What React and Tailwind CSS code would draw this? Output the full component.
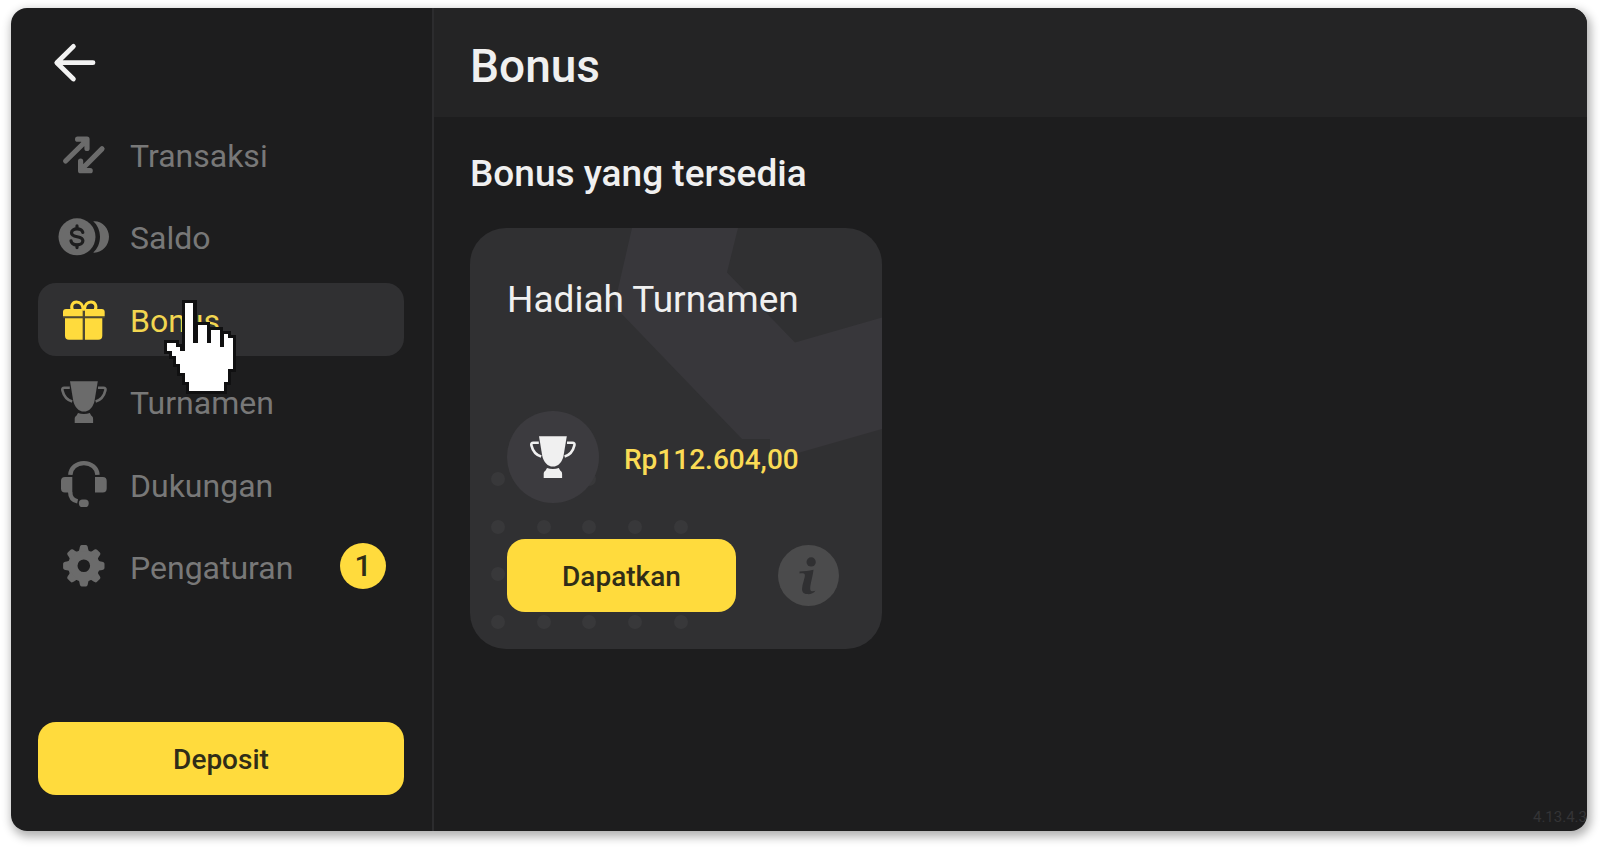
import React from "react";

function IconBox({ children }) {
  return (
    <svg viewBox="0 0 52 52" className="size-13 shrink-0" fill="currentColor" aria-hidden="true">
      {children}
    </svg>
  );
}

function TransferIcon() {
  return (
    <IconBox>
      <g fill="none" stroke="currentColor" strokeWidth="5.2" strokeLinecap="round" strokeLinejoin="round">
        <path d="M7.6 32 28.5 11.5M19.6 10.2H29V19.4" />
        <path d="M44 19.8 23 41M22.6 32V41.7H32.2" />
      </g>
      <path d="M20 9.5H30V20L27 16 24 13ZM22 32V42.5H32L28 39 25 36Z" />
    </IconBox>
  );
}

function CoinsIcon() {
  return (
    <IconBox>
      <circle cx="19" cy="25.8" r="18.5" />
      <path d="M35.2 10.2C44 9.4 51 17 51 25.8S44 42.2 35.2 41.6C39.4 38 42 32 42 25.8S39.4 13.8 35.2 10.2Z" />
      <g fill="none" stroke="#1d1d1e" strokeWidth="3.2" strokeLinecap="round">
        <path d="M24.8 21.4C24.2 19 21.8 17.8 19 17.8 15.8 17.8 13.5 19.5 13.5 21.8 13.5 27.6 24.9 23.9 24.9 29.8 24.9 32.2 22.4 33.9 19 33.9 15.8 33.9 13.4 32.5 13 29.8" />
        <path d="M19 14.9V17.5M19 34V36.6" />
      </g>
    </IconBox>
  );
}

function GiftIcon() {
  return (
    <IconBox>
      <g fill="none" stroke="currentColor" strokeWidth="3">
        <path d="M25.2 17.5C25.2 11.5 22 9 18.6 9 14.4 9 12.4 13 14.6 17.5" />
        <path d="M26.4 17.5C26.4 11.5 29.6 9 33 9 37.2 9 39.2 13 37 17.5" />
      </g>
      <path d="M8 16H24.7V23.3H5V19A3 3 0 0 1 8 16ZM27 16H43.7A3 3 0 0 1 46.7 19V23.3H27Z" />
      <path d="M7 25.3H24.7V46.7H11A4 4 0 0 1 7 42.7ZM27 25.3H44.3V42.7A4 4 0 0 1 40.3 46.7H27Z" />
      <path d="M5 23.3H46.7V25.3H5ZM24.7 16H27V46.7H24.7Z" fillOpacity="0.15" />
    </IconBox>
  );
}

function TrophyIcon() {
  return (
    <IconBox>
      <path d="M12 5.3H39.8L36.6 24.5C35.3 31.3 31 35.6 25.9 35.6S16.5 31.3 15.2 24.5Z" />
      <path d="M20 37C23.5 38.2 28.3 38.2 31.8 37L33.2 39.6C34.6 40.4 35.1 41.5 35.1 43V47H16.7V43C16.7 41.5 17.2 40.4 18.6 39.6Z" />
      <g fill="none" stroke="currentColor" strokeWidth="2.6">
        <path d="M11.8 11.7H6.4C4.6 11.7 4 12.8 4.4 14.4 5.7 19.8 9 24 14.2 25.6" />
        <path d="M40 11.7H45.4C47.2 11.7 47.8 12.8 47.4 14.4 46.1 19.8 42.8 24 37.6 25.6" />
      </g>
    </IconBox>
  );
}

function HeadsetIcon() {
  return (
    <IconBox>
      <path d="M12.3 16.9C12.6 10 18.5 5.1 25.9 5.1S39.2 10 39.5 16.9" fill="none" stroke="currentColor" strokeWidth="4.4" />
      <path d="M14.3 18.9V34.6H7A4 4 0 0 1 3 30.6V22.9A4 4 0 0 1 7 18.9ZM37 18.9H44.7A4 4 0 0 1 48.7 22.9V30.6A4 4 0 0 1 44.7 34.6H37Z" />
      <path d="M12.2 34C12.2 39 14.8 42.4 19.6 43.4" fill="none" stroke="currentColor" strokeWidth="4.4" />
      <rect x="20.9" y="41.5" width="9.8" height="7.5" rx="3.6" />
    </IconBox>
  );
}

const TOOTH = "M-5.6 -14 C-4 -15.5 -4.4 -18.4 -3.6 -19.8 Q-3 -20.7 -2 -20.7 H2 Q3 -20.7 3.6 -19.8 C4.4 -18.4 4 -15.5 5.6 -14Z";

function GearIcon() {
  return (
    <IconBox>
      <g transform="translate(25.8 25.8)">
        <path fillRule="evenodd" d="M0-15.8A15.8 15.8 0 1 1 0 15.8 15.8 15.8 0 1 1 0-15.8ZM0-6.3A6.3 6.3 0 1 0 0 6.3 6.3 6.3 0 1 0 0-6.3Z" />
        {[0, 45, 90, 135, 180, 225, 270, 315].map((angle) => (
          <path key={angle} d={TOOTH} transform={`rotate(${angle})`} />
        ))}
      </g>
    </IconBox>
  );
}

const NAV_ITEMS = [
  { label: "Transaksi", Icon: TransferIcon },
  { label: "Saldo", Icon: CoinsIcon },
  { label: "Bonus", Icon: GiftIcon, active: true },
  { label: "Turnamen", Icon: TrophyIcon },
  { label: "Dukungan", Icon: HeadsetIcon },
  { label: "Pengaturan", Icon: GearIcon, badge: 1 },
];

function NavItem({ label, Icon, active, badge }) {
  return (
    <a
      href="#"
      aria-current={active ? "page" : undefined}
      className={
        active
          ? "flex h-[73px] items-center gap-5 rounded-[18px] bg-[#303032] pr-[18px] pl-5 text-[#ffdb3d]"
          : "flex h-[73px] items-center gap-5 rounded-[18px] pr-[18px] pl-5 text-[#6b6b6b]"
      }
    >
      <Icon />
      <span className={active ? "pt-[3px] text-[32px] leading-10 text-[#f2d650]" : "pt-[3px] text-[32px] leading-10 text-[#787878]"}>
        {label}
      </span>
      {badge && (
        <span className="ml-auto flex size-[46px] items-center justify-center rounded-full bg-[#ffdb3d] text-[30px] leading-10 font-medium text-[#302d18]">
          {badge}
        </span>
      )}
    </a>
  );
}

function Sidebar() {
  return (
    <aside className="flex w-[423px] shrink-0 flex-col border-r-2 border-[#2c2c2e] pr-7 pb-9 pl-[27px]">
      <div className="h-[110px] pt-[35px] pl-[15px]">
        <button type="button" aria-label="Kembali" className="block text-[#f2f2f2]">
          <svg viewBox="0 0 44 40" className="h-10 w-11" fill="none" stroke="currentColor" strokeWidth="4.8" strokeLinecap="round" strokeLinejoin="round" aria-hidden="true">
            <path d="M20.4 3.4 3.8 19.7 20.4 36M4.6 19.7H40" />
          </svg>
        </button>
      </div>
      <nav className="flex h-[485px] flex-col justify-between">
        {NAV_ITEMS.map((item) => (
          <NavItem key={item.label} {...item} />
        ))}
      </nav>
      <button type="button" className="mt-auto h-[73px] rounded-[18px] bg-[#ffdb3d] pt-0.5 text-[28px] font-medium text-[#302d18]">
        Deposit
      </button>
    </aside>
  );
}

const DOTS = [
  [28, 251], [119, 251],
  [28, 299], [74, 299], [119, 299], [165, 299], [211, 299],
  [28, 346],
  [28, 394], [74, 394], [119, 394], [165, 394], [211, 394],
];

function CardBackdrop() {
  return (
    <svg viewBox="0 0 412 421" className="absolute inset-0 size-full" aria-hidden="true">
      <path d="M162 0H268L257 44.5 325 114.5 412 89.5V201L300 233V211H272L147 81Q144 78 145 74Z" fill="#38373b" />
      {DOTS.map(([x, y]) => (
        <circle key={`${x}-${y}`} cx={x} cy={y} r="7" fill="#38383a" />
      ))}
    </svg>
  );
}

function BonusCard() {
  return (
    <article className="relative w-[412px] overflow-hidden rounded-[36px] bg-[#303032]">
      <CardBackdrop />
      <div className="relative px-[37px] pt-[50px] pb-[37px]">
        <h3 className="text-[37px] leading-11 text-[#f0f0f0]">Hadiah Turnamen</h3>
        <div className="mt-[89px] flex items-center gap-[25px]">
          <div className="flex size-[92px] items-center justify-center rounded-full bg-[#3c3b3f] text-[#f0f0f0]">
            <TrophyIcon />
          </div>
          <p className="pt-1.5 text-[28px] leading-8 font-medium text-[#fadb55]">Rp112.604,00</p>
        </div>
        <div className="mt-9 flex items-center gap-[42px]">
          <button type="button" className="h-[73px] w-[229px] rounded-[18px] bg-[#ffdb3d] pt-0.5 text-[28px] font-medium text-[#302d18]">
            Dapatkan
          </button>
          <button type="button" aria-label="Info">
            <svg viewBox="0 0 184 184" className="size-[61px]" aria-hidden="true">
              <circle cx="92" cy="92" r="92" fill="#4b4b4c" />
              <g fill="#303032">
                <circle cx="100" cy="51" r="14" />
                <path d="M65 80C79 80 93 78 107 75 106 90 98 116 97 131 97 140 104 141 113 138 108 146 97 149 88 148 76 147 71 140 73 128 75 113 82 98 81 90 80 85 73 85 65 86Z" />
              </g>
            </svg>
          </button>
        </div>
      </div>
    </article>
  );
}

// Filled runs per pixel row of the hand pointer: [row, start column, end column].
const HAND_RUNS = [
  [0, 4, 6], [1, 4, 6], [2, 4, 6], [3, 4, 6], [4, 4, 6],
  [5, 4, 6], [5, 7, 9],
  [6, 4, 6], [6, 7, 9], [6, 10, 12],
  [7, 4, 6], [7, 7, 9], [7, 10, 12], [7, 13, 14],
  [8, 4, 6], [8, 7, 9], [8, 10, 12], [8, 13, 15],
  [9, 0, 2], [9, 4, 12], [9, 13, 15],
  [10, 0, 3], [10, 4, 15],
  [11, 1, 15], [12, 2, 15], [13, 2, 15],
  [14, 3, 15], [15, 3, 14],
  [16, 4, 14], [17, 4, 14],
  [18, 5, 13], [19, 5, 13],
];

const EDGE = 0.7;

function HandPointer() {
  return (
    <svg viewBox="-1 -1 17 22" className="pointer-events-none absolute top-[291px] left-[152px] h-24 w-[74px]" shapeRendering="crispEdges" aria-hidden="true">
      <g fill="#101011">
        {HAND_RUNS.map(([row, from, to]) => (
          <rect key={`${row}-${from}`} x={from - EDGE} y={row - EDGE} width={to - from + 2 * EDGE} height={1 + 2 * EDGE} />
        ))}
      </g>
      <g fill="#ffffff">
        {HAND_RUNS.map(([row, from, to]) => (
          <rect key={`${row}-${from}`} x={from} y={row} width={to - from} height="1" />
        ))}
      </g>
    </svg>
  );
}

export default function App() {
  return (
    <div className="flex min-h-screen bg-white pt-2 pr-[13px] pb-[17px] pl-[11px] font-[Roboto,sans-serif]">
      <div className="flex flex-1 rounded-2xl shadow-[2px_4px_10px_2px_rgba(0,0,0,0.3)]">
        <div className="relative flex flex-1 overflow-hidden rounded-2xl bg-[#1d1d1e]">
          <Sidebar />
          <main className="min-w-0 flex-1">
            <header className="flex h-[109px] items-center bg-[#242425] pt-1.5 pl-9">
              <h1 className="text-[46px] leading-13 font-medium text-[#f0f0f0]">Bonus</h1>
            </header>
            <section className="px-9 pt-[35px]">
              <h2 className="mb-8 text-[37px] leading-11 font-medium text-[#f0f0f0]">Bonus yang tersedia</h2>
              <BonusCard />
            </section>
          </main>
          <span className="absolute right-0 bottom-1 text-[15px] leading-5 text-[#343436]">4.13.4.3</span>
          <HandPointer />
        </div>
      </div>
    </div>
  );
}
